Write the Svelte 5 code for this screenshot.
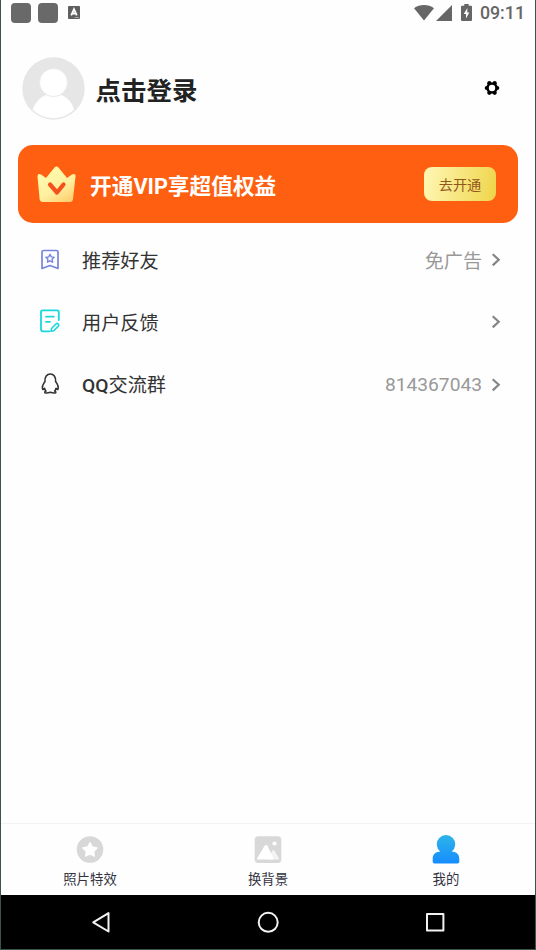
<script lang="ts">
  type Row = { icon: string; prefix?: string; label: string; value: string };

  const rows: Row[] = [
    { icon: 'bookmark', label: '推荐好友', value: '免广告' },
    { icon: 'feedback', label: '用户反馈', value: '' },
    { icon: 'qq', prefix: 'QQ', label: '交流群', value: '814367043' }
  ];

  const tabs = [
    { id: 'effects', label: '照片特效' },
    { id: 'background', label: '换背景' },
    { id: 'mine', label: '我的' }
  ];

  let active = $state('mine');
</script>

<div class="phone">
  <header class="status-bar">
    <div class="notices">
      <span class="block"></span>
      <span class="block"></span>
      <svg class="ime" width="12" height="13" viewBox="0 0 12 13">
        <rect width="12" height="13" rx="1" fill="#5f5f5f" />
        <path d="M3.2 9.3L6 3.2L8.8 9.3M4.3 7.5H7.7" fill="none" stroke="#fff" stroke-width="1.8" />
        <path d="M6.5 11.5H11" stroke="#bbb" stroke-width="0.8" />
      </svg>
    </div>
    <div class="system">
      <svg width="20" height="16" viewBox="0 0 20 16">
        <path d="M0 3.3C5.5 -1.1 14.5 -1.1 20 3.3L10 15.5Z" fill="#666" />
      </svg>
      <svg class="signal" width="16" height="16" viewBox="0 0 16 16">
        <path d="M16 0V16H0Z" fill="#666" />
      </svg>
      <svg class="battery" width="11" height="17" viewBox="0 0 11 17">
        <path d="M3.3 0H7.7V1.8H10A1 1 0 0 1 11 2.8V16A1 1 0 0 1 10 17H1A1 1 0 0 1 0 16V2.8A1 1 0 0 1 1 1.8H3.3Z" fill="#666" />
        <path d="M6.3 4L2.8 10H5V14.5L8.3 8.4H6.3Z" fill="#fff" />
      </svg>
      <span class="clock">09:11</span>
    </div>
  </header>

  <section class="profile">
    <svg class="avatar" width="63" height="63" viewBox="0 0 63 63">
      <circle cx="31.5" cy="31.5" r="31.2" fill="#e6e6e6" />
      <path d="M10.5 52.5C14 44.5 19 39.5 24 38C28.5 40.3 34.5 40.3 39 38C44.5 39.5 49.5 44.5 52.2 52.5C40.5 64 22 64 10.5 52.5Z" fill="#fff" />
      <circle cx="31.5" cy="25.5" r="14" fill="#fff" stroke="#e6e6e6" stroke-width="0.8" />
    </svg>
    <h1>点击登录</h1>
    <button class="settings" aria-label="设置">
      <svg width="16" height="16" viewBox="0 0 16 16">
        <g fill="#000">
          <circle cx="8" cy="8" r="5.8" />
          <circle cx="5.3" cy="3.2" r="2.1" />
          <circle cx="10.7" cy="3.2" r="2.1" />
          <circle cx="13.2" cy="8" r="2.1" />
          <circle cx="10.7" cy="12.8" r="2.1" />
          <circle cx="5.3" cy="12.8" r="2.1" />
          <circle cx="2.8" cy="8" r="2.1" />
        </g>
        <circle cx="8" cy="8" r="3.2" fill="#fff" />
      </svg>
    </button>
  </section>

  <section class="vip">
    <svg class="crown" width="40" height="37" viewBox="0 0 40 37">
      <defs>
        <linearGradient id="gold" x1="0.2" y1="0" x2="0.8" y2="1">
          <stop offset="0" stop-color="#fffcae" />
          <stop offset="0.6" stop-color="#fff0a0" />
          <stop offset="1" stop-color="#ffce70" />
        </linearGradient>
      </defs>
      <path d="M17.5 1.5Q19.5 -0.5 21.5 1.5L30 12L35 8.5Q39 7 38.5 10.5L36 33Q35.7 36 33 36H5.5Q2.9 36 2.6 33L0.5 10.5Q0.5 7 4 8.5L9 12Z" fill="url(#gold)" />
      <path d="M13 18.5L20 26.5L26.5 18.5" fill="none" stroke="#f5511c" stroke-width="4.2" stroke-linecap="round" stroke-linejoin="round" />
    </svg>
    <h2>开通VIP享超值权益</h2>
    <button class="open">去开通</button>
  </section>

  <ul class="menu">
    {#each rows as row (row.icon)}
      <li>
        <svg class="row-icon" width="24" height="26" viewBox="0 0 24 26" fill="none" stroke-linecap="round" stroke-linejoin="round">
          {#if row.icon === 'bookmark'}
            <path d="M4 21.5V5Q4 3.5 5.5 3.5H18.5Q20 3.5 20 5V21.5L12 18.5Z" stroke="#7885dc" stroke-width="1.7" />
            <path d="M12 7.3L13.3 9.9L16.1 10.3L14.1 12.3L14.6 15.2L12 13.8L9.4 15.2L9.9 12.3L7.9 10.3L10.7 9.9Z" stroke="#7885dc" stroke-width="1.4" />
          {:else if row.icon === 'feedback'}
            <path d="M11.5 22.3H5Q3 22.3 3 20.3V3Q3 1.3 4.8 1.3H19Q20.8 1.3 20.8 3V11" stroke="#18d8dc" stroke-width="1.8" />
            <path d="M8 7.7H15.8M8 12.8H12" stroke="#18d8dc" stroke-width="1.8" />
            <path d="M13.5 19.5L18.2 14.8Q19.3 14 20.3 15Q21.3 16.1 20.4 17.1L15.8 21.7L13.1 22.2Z" stroke="#18d8dc" stroke-width="1.6" />
          {:else}
            <path d="M7 9.5C6.5 4.7 9 2 12.3 2S18 4.7 17.6 9.5C19.5 12 20.7 15 19.9 17.2C19.5 17.8 18.9 17.3 18 16.4C17.7 17.6 17.3 18.3 16.6 19C18.3 19.7 18.1 21 16.8 21C14.7 21.1 13.4 20.7 12.3 20.3C11.2 20.7 9.9 21.1 7.8 21C6.5 21 6.3 19.7 8 19C7.3 18.3 6.9 17.6 6.6 16.4C5.7 17.3 5.1 17.8 4.7 17.2C3.9 15 5.1 12 7 9.5Z" stroke="#333" stroke-width="1.6" />
          {/if}
        </svg>
        <span class="label">{#if row.prefix}<b>{row.prefix}</b>{/if}{row.label}</span>
        <span class="value" class:number={row.icon === 'qq'}>{row.value}</span>
        <svg class="chevron" width="10" height="14" viewBox="0 0 10 14">
          <path d="M1.7 1.2L7.7 6.8L1.7 12.4" fill="none" stroke="#858585" stroke-width="2.2" />
        </svg>
      </li>
    {/each}
  </ul>

  <nav class="tabs">
    {#each tabs as tab (tab.id)}
      <button class="tab" class:active={active === tab.id} onclick={() => (active = tab.id)}>
        <svg width="28" height="30" viewBox="0 0 28 30">
          {#if tab.id === 'effects'}
            <circle cx="14" cy="15.5" r="13.3" fill="#d8d8d8" />
            <path d="M14 8.8L16.2 13.1L21 13.9L17.6 17.3L18.3 22L14 19.8L9.7 22L10.4 17.3L7 13.9L11.8 13.1Z" fill="#fff" stroke="#fff" stroke-width="1.5" stroke-linejoin="round" />
          {:else if tab.id === 'background'}
            <rect x="0.7" y="2.3" width="26.6" height="26.6" rx="3.5" fill="#d8d8d8" />
            <path d="M14 25.5L18.2 17Q19.3 15.2 20.5 17L25 24Q25.5 25.5 24 25.5Z" fill="#f3f3f3" />
            <path d="M3.5 25.5Q2.7 25.5 3.2 24.2L10.3 12.3Q12 9.7 13.7 12.3L20 25.5Z" fill="#fff" />
            <circle cx="20.5" cy="9.5" r="2.1" fill="#fff" />
          {:else}
            <defs>
              <linearGradient id="person" x1="0" y1="0" x2="0" y2="1">
                <stop offset="0" stop-color="#2db5e8" />
                <stop offset="1" stop-color="#168cff" />
              </linearGradient>
            </defs>
            <path d="M8.3 17.4A9.2 9.2 0 1 1 19.7 17.4C25 17.6 27.3 20.5 27.3 25V27.7Q27.3 29.5 25.5 29.5H2.5Q0.7 29.5 0.7 27.7V25C0.7 20.5 3 17.6 8.3 17.4Z" fill="url(#person)" />
          {/if}
        </svg>
        <span>{tab.label}</span>
      </button>
    {/each}
  </nav>

  <footer class="nav-bar">
    <svg width="24" height="24" viewBox="0 0 24 24">
      <path d="M4.2 12.3L19.5 3.1V21.5Z" />
    </svg>
    <svg width="24" height="24" viewBox="0 0 24 24">
      <circle cx="12.2" cy="12.3" r="9.5" />
    </svg>
    <svg width="24" height="24" viewBox="0 0 24 24">
      <rect x="4" y="4" width="16.4" height="16.4" />
    </svg>
  </footer>
</div>

<style>
  :global(body) {
    margin: 0;
    background: #fff;
  }

  .phone {
    display: flex;
    flex-direction: column;
    box-sizing: border-box;
    width: 536px;
    height: 950px;
    border: 1px solid #38544f;
    border-top: 0;
    background: #fefefe;
    font-family: Roboto, 'Noto Sans CJK SC', sans-serif;
    color: #333;
  }

  button {
    border: 0;
    padding: 0;
    background: none;
    font-family: inherit;
    cursor: pointer;
  }

  h1,
  h2 {
    margin: 0;
  }

  .status-bar {
    display: flex;
    justify-content: space-between;
    align-items: center;
    height: 25px;
    padding: 0 10px 0 10px;
  }

  .notices,
  .system {
    display: flex;
    align-items: center;
  }

  .block {
    width: 20px;
    height: 20px;
    margin-right: 7px;
    border-radius: 4px;
    background: #696969;
  }

  .ime {
    margin-left: 3px;
  }

  .signal {
    margin-left: 2px;
  }

  .battery {
    margin: 0 8px 0 9px;
  }

  .clock {
    margin-top: 1px;
    font-size: 17.8px;
    font-weight: 500;
    line-height: 24px;
    color: #666;
  }

  .profile {
    display: flex;
    align-items: center;
    height: 63px;
    margin: 32px 35.5px 0 21px;
  }

  .profile h1 {
    flex: 1;
    margin: 4px 0 0 10.5px;
    font-size: 25.5px;
    line-height: 36px;
    font-weight: 700;
    color: #222;
  }

  .settings {
    display: flex;
    margin-bottom: 1px;
  }

  .vip {
    display: flex;
    align-items: center;
    box-sizing: border-box;
    height: 78px;
    margin: 25px 17px 0 17px;
    padding: 0 22px 0 19px;
    border-radius: 15px;
    background: #ff5f10;
  }

  .vip h2 {
    flex: 1;
    margin: 5px 0 0 13px;
    font-size: 21.7px;
    line-height: 30px;
    font-weight: 700;
    color: #fff;
  }

  .open {
    width: 72px;
    height: 34px;
    border-radius: 8px;
    background: linear-gradient(100deg, #fff7b5, #efd54a);
    font-size: 14.2px;
    color: #93571b;
  }

  .menu {
    flex: 1;
    margin: 6px 0 0;
    padding: 0 34px 0 37px;
    list-style: none;
  }

  .menu li {
    display: flex;
    align-items: center;
    height: 62.3px;
  }

  .label {
    margin: 3px 0 0 20px;
    font-size: 19.2px;
    line-height: 28px;
    color: #333;
  }

  .label b {
    font-weight: 500;
  }

  .value {
    flex: 1;
    margin: 3px 9px 0 0;
    text-align: right;
    font-size: 19.1px;
    line-height: 28px;
    color: #999;
  }

  .value.number {
    margin-top: 0;
    font-size: 19.2px;
  }

  .tabs {
    display: grid;
    grid-template-columns: repeat(3, 1fr);
    height: 71px;
    border-top: 1px solid #f3f3f3;
  }

  .tab {
    display: flex;
    flex-direction: column;
    align-items: center;
    padding-top: 10px;
    font-size: 13.4px;
    line-height: 20px;
    color: #33333f;
  }

  .tab span {
    margin-top: 6px;
  }

  .nav-bar {
    display: flex;
    justify-content: center;
    align-items: center;
    gap: 143px;
    height: 54px;
    background: #000;
  }

  .nav-bar svg {
    fill: none;
    stroke: #f2f2f2;
    stroke-width: 2;
    stroke-linejoin: round;
  }
</style>
